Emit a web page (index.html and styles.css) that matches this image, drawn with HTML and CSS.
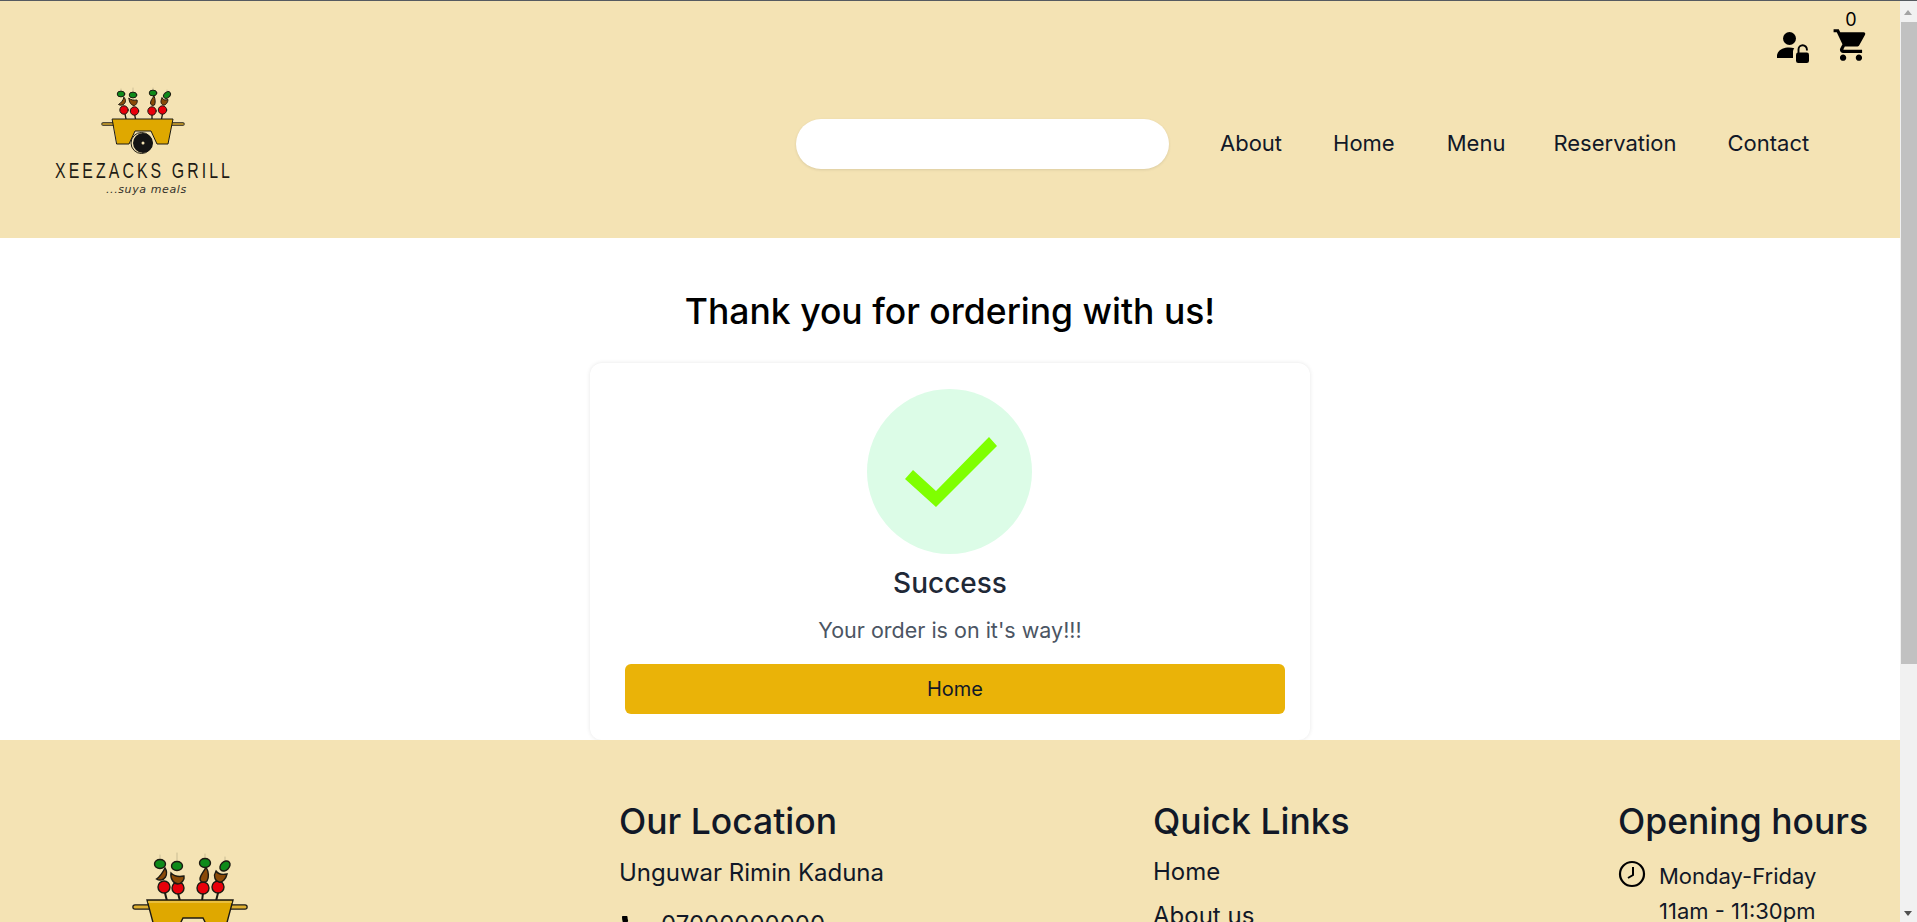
FILE: index.html
```html
<!DOCTYPE html>
<html lang="en">
<head>
<meta charset="utf-8">
<title>Xeezacks Grill</title>
<link rel="stylesheet" href="styles.css">
</head>
<body>
<div class="viewport">
  <div class="page">
    <header class="site-header">
      <div class="brand">
        <svg class="logo-art" viewBox="0 0 90 75" width="90" height="75" aria-hidden="true">
          <g stroke="#1c1a12" stroke-width="1" stroke-linecap="round">
            <path d="M21 9V4M33 9V3M53 9V3M67 9V5" stroke="#b8ad88" stroke-width=".6"/>
            <path d="M26 34L25 29M35.500 34L34.500 29M52 34L52 29M61.500 34L62.500 29" stroke-width="1.300"/>
            <path d="M3 39H83" stroke-width="3.400"/>
            <path d="M3 39H83" stroke="#e0b030" stroke-width="1.700"/>
            <path d="M12.500 34H73L68 59H57L51 46H35L29 59H17Z" fill="#dfa800" stroke-width="1"/>
            <circle cx="24" cy="25" r="4.200" fill="#e8000a"/>
            <circle cx="34.500" cy="26" r="4.200" fill="#e8000a"/>
            <circle cx="52" cy="26" r="4.200" fill="#e8000a"/>
            <circle cx="62.500" cy="25" r="4.200" fill="#e8000a"/>
            <path d="M24 12.500c2 2 2 4 .5 6c-1.500 2-4.500 2-6 1c2.500-1.500 4.500-4 5.500-7Z" fill="#8a4a08"/>
            <path d="M29 13.500c2 1.500 5 2 8 1.500c1 2-1 5.500-3 5.500c-2.500 0-5-3-5-7Z" fill="#8a4a08"/>
            <path d="M54 11c1.500 3 1.500 7 .5 9c-2 1-4 0-4-2c0-2.500 2-4.500 3.500-7Z" fill="#8a4a08"/>
            <path d="M62 13c1.500 2 3 2.500 6 1.500c0 3-2.500 6-4.500 5.500c-2.500-.5-3.500-3.500-1.500-7Z" fill="#8a4a08"/>
            <ellipse cx="21" cy="9" rx="3.800" ry="2.900" fill="#0e8a1a"/>
            <ellipse cx="33" cy="10" rx="3.800" ry="2.900" fill="#0e8a1a"/>
            <ellipse cx="53" cy="8" rx="3.800" ry="2.900" fill="#0e8a1a"/>
            <ellipse cx="67" cy="10" rx="3.900" ry="2.700" fill="#0e8a1a" transform="rotate(-40 67 10)"/>
          </g>
          <circle cx="41.500" cy="58" r="10.500" fill="#f4e3b4" stroke="#1c1a12" stroke-width="1"/>
          <circle cx="43" cy="58" r="10" fill="#141414"/>
          <circle cx="43" cy="58" r="1.500" fill="#f4e3b4"/>
        </svg>
        <div class="logo-name">XEEZACKS GRILL</div>
        <div class="logo-tag">...suya meals</div>
      </div>
      <div class="header-right">
        <div class="icons">
          <svg class="icon-user" viewBox="0 0 35 35" width="35" height="35" aria-hidden="true">
            <circle cx="12.500" cy="10.500" r="6.500" fill="#000"/>
            <path d="M0 30v-3c1-5 6-7.500 12-7.500c2 0 3.800.3 5.300.8c-.9 1-1.300 2.200-1.300 3.700V30Z" fill="#000"/>
            <rect x="19" y="24.500" width="13" height="10.500" rx="2.200" fill="#000"/>
            <path d="M21.500 25v-3.500a4.200 4.200 0 0 1 8.400 0v1" fill="none" stroke="#000" stroke-width="1.900"/>
          </svg>
          <div class="cart">
            <span class="cart-count">0</span>
            <svg viewBox="0 0 24 24" width="38" height="38" aria-hidden="true"><path fill="#000" d="M7 18c-1.100 0-1.990.9-1.990 2S5.900 22 7 22s2-.9 2-2-.9-2-2-2zM1 2v2h2l3.600 7.590-1.350 2.450c-.16.280-.25.610-.25.960 0 1.100.9 2 2 2h12v-2H7.420c-.14 0-.25-.11-.25-.25l.03-.12.9-1.630h7.450c.75 0 1.410-.41 1.750-1.030l3.580-6.490A1 1 0 0 0 20 4H5.210l-.94-2H1zm16 16c-1.100 0-1.990.9-1.990 2s.89 2 1.990 2 2-.9 2-2-.9-2-2-2z"/></svg>
          </div>
        </div>
        <div class="nav-row">
          <div class="search"></div>
          <nav class="nav">
            <a>About</a><a>Home</a><a>Menu</a><a>Reservation</a><a>Contact</a>
          </nav>
        </div>
      </div>
    </header>
    <main class="main">
      <h1 class="thanks">Thank you for ordering with us!</h1>
      <section class="card">
        <div class="circle">
          <svg viewBox="0 0 92 70" width="92" height="70" aria-hidden="true"><path d="M0 42L8 33L31 54L84 0L92 9L31 70Z" fill="#7fff00"/></svg>
        </div>
        <h2 class="success">Success</h2>
        <p class="order">Your order is on it's way!!!</p>
        <a class="home-btn">Home</a>
      </section>
    </main>
    <footer class="footer">
      <div class="foot-logo">
        <svg viewBox="0 0 114 70" width="114" height="70" aria-hidden="true">
          <g stroke="#1c1a12" stroke-width="1.200" stroke-linecap="round">
            <path d="M27 4V0M44 6V-2M72 4V-1M92 6V2" stroke="#b8ad88" stroke-width=".7"/>
            <path d="M32 38L34 46M45 38L47 46M70 38L69 46M85 38L83 46" stroke-width="2"/>
            <path d="M2 52H112" stroke-width="5.500"/>
            <path d="M2 52H112" stroke="#e0b030" stroke-width="3"/>
            <path d="M14 45H100L92 75H22Z" fill="#dfa800" stroke-width="1.400"/>
            <path d="M15.500 47H98.500" stroke="#eec650" stroke-width="1.500"/>
            <path d="M44 75L50 63H70L76 75" fill="#f4e3b4" stroke-width="1.400"/>
            <circle cx="31" cy="32" r="6" fill="#e8000a" stroke-width="1.400"/>
            <circle cx="45" cy="33" r="6" fill="#e8000a" stroke-width="1.400"/>
            <circle cx="70" cy="33" r="6" fill="#e8000a" stroke-width="1.400"/>
            <circle cx="85" cy="32" r="6" fill="#e8000a" stroke-width="1.400"/>
            <path d="M32 13c2 3 2 6 .5 9c-2 3-6 4-9 2c3-2 6-6 8.500-11Z" fill="#8a4a08" stroke-width="1.400"/>
            <path d="M38 18c3 3 8 4 13 3c1 4-3 8-6 8c-4 0-8-5-7-11Z" fill="#8a4a08" stroke-width="1.400"/>
            <path d="M73 12c3 5 3 11 1 14c-3 2-7 1-7-2c0-4 4-7 6-12Z" fill="#8a4a08" stroke-width="1.400"/>
            <path d="M83 16c2 3 6 4 11 3c-1 5-5 9-8 8c-4-1-6-6-3-11Z" fill="#8a4a08" stroke-width="1.400"/>
            <ellipse cx="27" cy="9" rx="5.500" ry="4.500" fill="#0e8a1a" stroke-width="1.400"/>
            <ellipse cx="44" cy="11" rx="5.500" ry="4.500" fill="#0e8a1a" stroke-width="1.400"/>
            <ellipse cx="72" cy="8" rx="5.500" ry="4.500" fill="#0e8a1a" stroke-width="1.400"/>
            <ellipse cx="92" cy="11" rx="5.800" ry="4.200" fill="#0e8a1a" stroke-width="1.400" transform="rotate(-45 92 11)"/>
          </g>
        </svg>
      </div>
      <div class="foot-col col-loc">
        <h3>Our Location</h3>
        <p>Unguwar Rimin Kaduna</p>
        <p class="phone"><svg viewBox="0 0 24 24" width="24" height="24" aria-hidden="true"><path fill="#000" d="M6.600 10.800c1.400 2.800 3.800 5.100 6.600 6.600l2.200-2.200c.3-.3.700-.4 1-.2 1.100.4 2.300.6 3.600.6.600 0 1 .4 1 1V20c0 .6-.4 1-1 1C10.600 21 3 13.400 3 4c0-.6.400-1 1-1h3.500c.6 0 1 .4 1 1 0 1.300.2 2.500.6 3.600.1.300 0 .7-.2 1Z"/></svg>07000000000</p>
      </div>
      <div class="foot-col col-links">
        <h3>Quick Links</h3>
        <p>Home</p>
        <p>About us</p>
      </div>
      <div class="foot-col col-hours">
        <h3>Opening hours</h3>
        <div class="hours">
          <svg viewBox="0 0 28 28" width="28" height="28" aria-hidden="true"><circle cx="14" cy="14" r="12" fill="none" stroke="#000" stroke-width="2.200"/><path d="M15 7V15L10 18" fill="none" stroke="#000" stroke-width="2"/></svg>
          <div><div>Monday-Friday</div><div>11am - 11:30pm</div></div>
        </div>
      </div>
    </footer>
  </div>
  <div class="scrollbar">
    <div class="arrow up"></div>
    <div class="thumb"></div>
    <div class="track"></div>
    <div class="arrow down"></div>
  </div>
</div>
</body>
</html>
```
FILE: styles.css
```css
* { box-sizing: border-box; }
html, body { margin: 0; height: 100%; overflow: hidden; }
body { font-family: "Inter", "Liberation Sans", sans-serif; color: #111827; background: #fff; }
.viewport { display: flex; height: 922px; border-top: 1px solid #555a60; }
.page { flex: 1; min-width: 0; overflow: hidden; }
.scrollbar { width: 17px; flex: none; display: flex; flex-direction: column; background: #f1f1f1; }
.arrow { flex: none; position: relative; }
.arrow.up { height: 21px; }
.arrow.down { height: 17px; }
.arrow::after { content: ""; position: absolute; left: 4px; border-left: 4.500px solid transparent; border-right: 4.500px solid transparent; }
.arrow.up::after { top: 9px; border-bottom: 5px solid #a3a3a3; }
.arrow.down::after { top: 6px; border-top: 5px solid #505050; }
.thumb { height: 642px; background: #c1c1c1; margin-left: 1px; flex: none; }
.track { flex: 1; }

.site-header { height: 237px; background: #f4e3b4; display: flex; }
.brand { width: 300px; flex: none; display: flex; flex-direction: column; align-items: flex-start; padding: 84px 0 0 55px; }
.logo-art { display: block; margin-left: 45px; }
.logo-name { font-family: "Liberation Sans", sans-serif; font-size: 22px; letter-spacing: 4.300px; color: #1f1c14; margin-top: 1px; white-space: nowrap; line-height: 20px; transform: scaleX(.72); transform-origin: left center; }
.logo-tag { font-family: "DejaVu Sans", sans-serif; font-style: italic; font-size: 11px; letter-spacing: .6px; color: #33302a; margin-top: 2px; margin-left: 51px; line-height: 14px; white-space: nowrap; }
.header-right { flex: 1; display: flex; flex-direction: column; min-width: 0; }
.icons { display: flex; justify-content: flex-end; align-items: flex-start; gap: 20px; height: 118px; padding-right: 30px; }
.icon-user { margin-top: 27px; }
.cart { display: flex; flex-direction: column; align-items: center; margin-top: 9px; }
.cart-count { font-size: 18px; line-height: 20px; color: #000; height: 16px; }
.cart svg { display: block; }
.nav-row { display: flex; align-items: center; height: 50px; padding-left: 496px; }
.search { width: 373px; height: 50px; border-radius: 25px; background: #fff; box-shadow: 0 1px 3px rgba(0,0,0,.1); flex: none; }
.nav { display: flex; margin-left: 51px; margin-bottom: 2px; font-size: 22px; color: #111827; white-space: nowrap; }
.nav a:nth-child(1) { margin-right: 51px; }
.nav a:nth-child(2) { margin-right: 52px; }
.nav a:nth-child(3) { margin-right: 48px; }
.nav a:nth-child(4) { margin-right: 51px; }

.main { height: 502px; background: #fff; display: flex; flex-direction: column; align-items: center; overflow: hidden; }
.thanks { margin: 52px 0 0; font-size: 35.500px; line-height: 44px; font-weight: 500; color: #000; text-align: center; }
.card { width: 720px; height: 377px; margin-top: 29px; border-radius: 12px; background: #fff; box-shadow: 0 0 4px rgba(0,0,0,.1); display: flex; flex-direction: column; align-items: center; padding-top: 26px; flex: none; }
.circle { width: 165px; height: 165px; margin-right: 1px; border-radius: 50%; background: #dcfce7; display: flex; align-items: center; justify-content: center; flex: none; }
.circle svg { margin-left: 3px; }
.success { margin: 11px 0 0; font-size: 28px; line-height: 36px; font-weight: 500; color: #1f2937; }
.order { margin: 15px 0 0; font-size: 21.500px; line-height: 28px; color: #4b5563; }
.home-btn { width: 660px; height: 50px; margin-top: 20px; margin-left: 10px; border-radius: 6px; background: #eab308; display: flex; align-items: center; justify-content: center; font-size: 20px; color: #111827; flex: none; }

.footer { height: 200px; background: #f4e3b4; display: flex; }
.foot-logo { width: 619px; padding: 115px 0 0 133px; flex: none; }
.foot-logo svg { display: block; overflow: visible; }
.foot-col { flex: none; padding-top: 58px; }
.foot-col h3 { margin: 0; font-size: 35.500px; line-height: 48px; font-weight: 500; color: #111827; white-space: nowrap; }
.foot-col p { margin: 0; font-size: 24px; line-height: 36px; white-space: nowrap; }
.col-loc { width: 534px; }
.col-loc p { margin-top: 9px; }
.col-loc .phone { display: flex; align-items: center; gap: 18px; margin-top: 16px; }
.col-links { width: 465px; }
.col-links p { margin-top: 8px; }
.col-links p + p { margin-top: 8px; }
.hours { display: flex; gap: 13px; margin-top: 13px; font-size: 22px; line-height: 35px; }
.hours > svg { flex: none; margin-top: 1px; }
```
